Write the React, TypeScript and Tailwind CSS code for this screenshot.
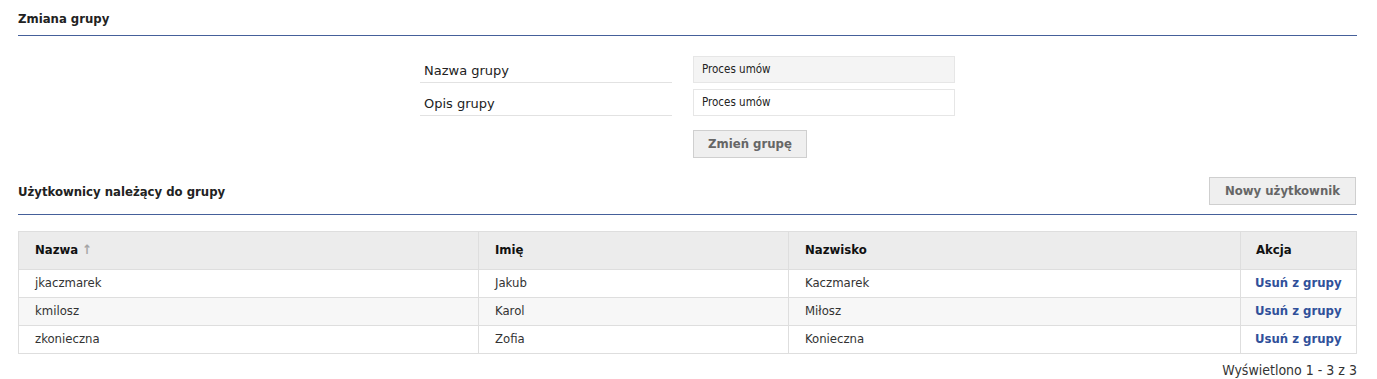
import React from "react";

const font = { fontFamily: '"DejaVu Sans Condensed", "DejaVu Sans", Verdana, sans-serif' };
const wide = { fontFamily: '"DejaVu Sans", Verdana, sans-serif' };

const users = [
  { login: "jkaczmarek", name: "Jakub", surname: "Kaczmarek" },
  { login: "kmilosz", name: "Karol", surname: "Miłosz" },
  { login: "zkonieczna", name: "Zofia", surname: "Konieczna" },
];

export default function App() {
  return (
    <div className="bg-white pl-[18px] pr-[20px] text-[#222]" style={font}>
      {/* Zmiana grupy */}
      <div className="pt-[9px] pb-[6px] text-[13px] font-bold text-[#222]">Zmiana grupy</div>
      <div className="h-px bg-[#45609a]" />

      <div className="flex justify-center pt-5">
        <div className="flex flex-col gap-[6px]">
          <div className="flex items-end">
            <div className="w-[252px] border-b border-[#e2e2e2] px-1 pb-[1px] text-[13px] text-[#222]" style={wide}>
              Nazwa grupy
            </div>
            <input
              readOnly
              value="Proces umów"
              className="ml-[21px] h-[27px] w-[262px] border border-[#e6e6e6] bg-[#f4f4f4] px-[8px] text-[11.5px] text-[#222] outline-none"
            />
          </div>
          <div className="flex items-end">
            <div className="w-[252px] border-b border-[#e2e2e2] px-1 pb-[1px] text-[13px] text-[#222]" style={wide}>
              Opis grupy
            </div>
            <input
              readOnly
              value="Proces umów"
              className="ml-[21px] h-[27px] w-[262px] border border-[#e6e6e6] bg-white px-[8px] text-[11.5px] text-[#222] outline-none"
            />
          </div>
          <div className="flex pt-[8px]">
            <div className="w-[273px]" />
            <button className="h-[28px] w-[114px] border border-[#cfcfcf] bg-[#efefef] text-[13px] font-bold text-[#666]">
              Zmień grupę
            </button>
          </div>
        </div>
      </div>

      {/* Użytkownicy */}
      <div className="mt-[19px] flex items-center justify-between pb-[9px]">
        <div className="pt-[2px] text-[13px] font-bold text-[#222]">Użytkownicy należący do grupy</div>
        <button className="mr-px h-[28px] w-[147px] border border-[#cfcfcf] bg-[#efefef] text-[13px] font-bold text-[#666]">
          Nowy użytkownik
        </button>
      </div>
      <div className="h-px bg-[#45609a]" />

      <table className="mt-[16px] w-full border-collapse text-[13px]">
        <thead>
          <tr className="h-[38px] bg-[#ececec] text-left">
            <th className="w-[460px] border border-[#dedede] pl-[16px] font-bold text-[#111]">
              Nazwa <span className="font-bold text-[#a5a5a5]">↑</span>
            </th>
            <th className="w-[310px] border border-[#dedede] pl-[16px] font-bold text-[#111]">Imię</th>
            <th className="border border-[#dedede] pl-[16px] font-bold text-[#111]">Nazwisko</th>
            <th className="w-[116px] border border-[#dedede] pl-[15px] font-bold text-[#111]">Akcja</th>
          </tr>
        </thead>
        <tbody>
          {users.map((u, i) => (
            <tr key={u.login} className={`h-[28px] ${i % 2 === 1 ? "bg-[#f7f7f7]" : "bg-white"}`}>
              <td className="border border-[#dedede] pl-[16px] text-[#333]">{u.login}</td>
              <td className="border border-[#dedede] pl-[16px] text-[#333]">{u.name}</td>
              <td className="border border-[#dedede] pl-[16px] text-[#333]">{u.surname}</td>
              <td className="border border-[#dedede] pl-[14px] font-bold text-[#30509a]">
                <a href="#">Usuń z grupy</a>
              </td>
            </tr>
          ))}
        </tbody>
      </table>

      <div className="pt-[6px] text-right text-[14px] text-[#333]">Wyświetlono 1 - 3 z 3</div>
    </div>
  );
}
